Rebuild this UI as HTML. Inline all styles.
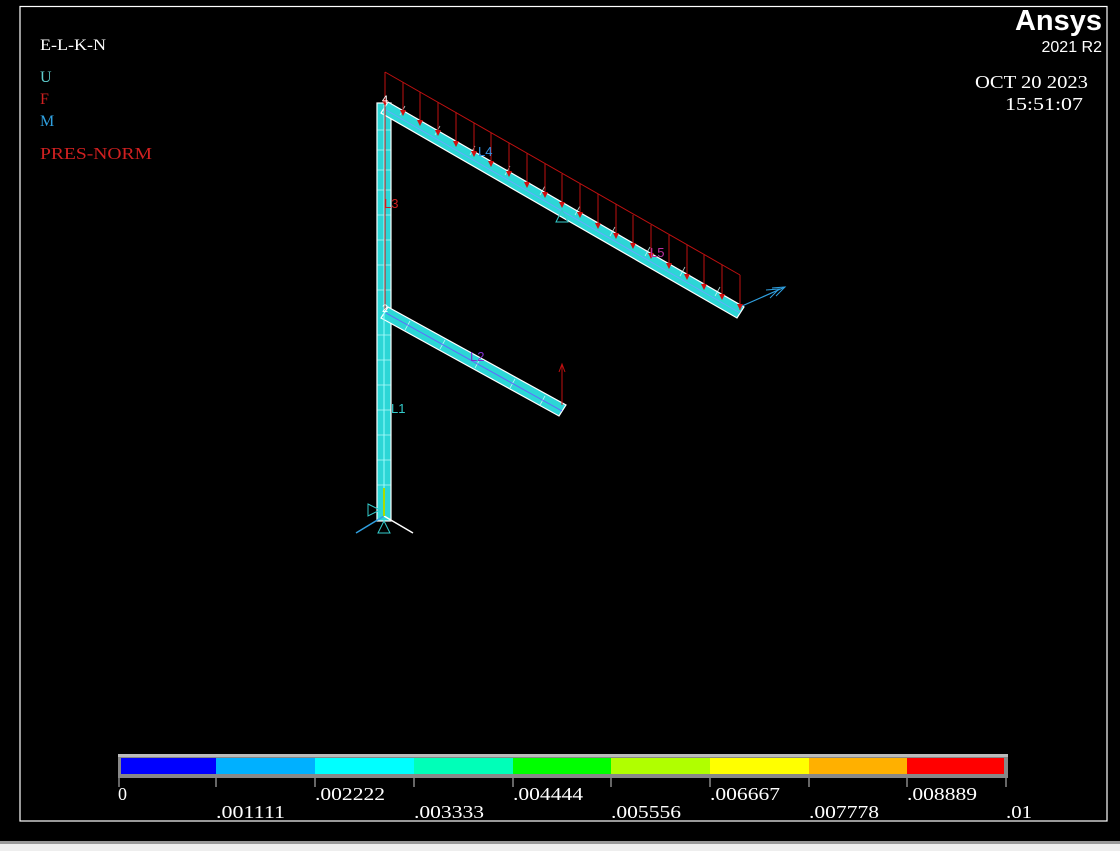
<!DOCTYPE html>
<html><head><style>
html,body{margin:0;padding:0;background:#000;width:1120px;height:851px;overflow:hidden}
svg{display:block}
text{font-family:"Liberation Serif",serif}
</style></head><body>
<svg width="1120" height="851" viewBox="0 0 1120 851">
<rect x="0" y="0" width="1120" height="851" fill="#000"/>
<rect x="20" y="6.5" width="1087" height="814.5" fill="none" stroke="#fff" stroke-width="1.2"/>
<rect x="0" y="841" width="1120" height="3" fill="#999"/>
<rect x="0" y="844" width="1120" height="7" fill="#eee"/>
<text x="40" y="50" fill="#fff" font-size="16" textLength="66" lengthAdjust="spacingAndGlyphs">E-L-K-N</text>
<text x="40" y="82" fill="#5fd0d0" font-size="16">U</text>
<text x="40" y="104" fill="#d02020" font-size="16">F</text>
<text x="40" y="126" fill="#30a0e0" font-size="16">M</text>
<text x="40" y="159" fill="#d02020" font-size="17" textLength="112" lengthAdjust="spacingAndGlyphs">PRES-NORM</text>
<text x="1102" y="30" fill="#fff" font-size="29" font-weight="bold" text-anchor="end" style="font-family:'Liberation Sans',sans-serif">Ansys</text>
<text x="1102" y="52" fill="#fff" font-size="16" text-anchor="end" style="font-family:'Liberation Sans',sans-serif">2021 R2</text>
<text x="975" y="88" fill="#fff" font-size="18" textLength="113" lengthAdjust="spacingAndGlyphs">OCT 20 2023</text>
<text x="1005" y="110" fill="#fff" font-size="18" textLength="78" lengthAdjust="spacingAndGlyphs">15:51:07</text>
<!-- pipes -->
<g stroke="#fff" stroke-width="1.2">
<rect x="377" y="103" width="14" height="418" fill="#2cd6d6"/>
<polygon points="388,102 744,307 737,318 381,113" fill="#2cd6d6"/>
<polygon points="388,307 566,405 559,416 381,318" fill="#2cd6d6"/>
</g>
<g stroke="#dff" stroke-width="0.8" fill="none" opacity="0.8">
<path d="M377,130h14M377,150h14M377,170h14M377,190h14M377,215h14M377,240h14M377,265h14M377,290h14M377,335h14M377,360h14M377,385h14M377,410h14M377,435h14M377,460h14M377,485h14"/>
<path d="M400,115l5,-9M435,135l5,-9M470,155l5,-9M505,175l5,-9M540,195l5,-9M575,215l5,-9M610,236l5,-9M645,256l5,-9M680,276l5,-9M715,296l5,-9"/>
<path d="M405,330l5,-9M440,349l5,-9M475,368l5,-9M510,388l5,-9M540,405l5,-9"/>
</g>
<line x1="384" y1="105" x2="384" y2="515" stroke="#9ff" stroke-width="1"/>
<line x1="386" y1="110" x2="740" y2="313" stroke="#6af" stroke-width="1"/>
<line x1="386" y1="313" x2="562" y2="411" stroke="#66f" stroke-width="1"/>
<!-- load -->
<g stroke="#c01010" stroke-width="1" fill="none">
<line x1="385" y1="72" x2="740" y2="275"/>
<line x1="385" y1="72" x2="385" y2="105"/>
<line x1="740" y1="275" x2="740" y2="310"/>
<line x1="403" y1="82" x2="403" y2="115"/><line x1="420" y1="92" x2="420" y2="125"/>
<line x1="438" y1="102" x2="438" y2="135"/><line x1="456" y1="112" x2="456" y2="146"/>
<line x1="474" y1="123" x2="474" y2="156"/><line x1="491" y1="133" x2="491" y2="166"/>
<line x1="509" y1="143" x2="509" y2="176"/><line x1="527" y1="153" x2="527" y2="187"/>
<line x1="545" y1="164" x2="545" y2="197"/><line x1="562" y1="174" x2="562" y2="207"/>
<line x1="580" y1="184" x2="580" y2="217"/><line x1="598" y1="194" x2="598" y2="228"/>
<line x1="616" y1="204" x2="616" y2="238"/><line x1="633" y1="215" x2="633" y2="248"/>
<line x1="651" y1="225" x2="651" y2="258"/><line x1="669" y1="235" x2="669" y2="268"/>
<line x1="687" y1="245" x2="687" y2="279"/><line x1="704" y1="255" x2="704" y2="289"/>
<line x1="722" y1="265" x2="722" y2="299"/>
<line x1="562" y1="405" x2="562" y2="364"/><polyline points="559,372 562,364 565,372"/>
<line x1="385" y1="103" x2="385" y2="310"/>
</g>
<g fill="#d01010">
<path d="M382,100h6l-3,6z M400,110h6l-3,6z M417,120h6l-3,6z M435,130h6l-3,6z M453,141h6l-3,6z M471,151h6l-3,6z M488,161h6l-3,6z M506,171h6l-3,6z M524,182h6l-3,6z M542,192h6l-3,6z M559,202h6l-3,6z M577,212h6l-3,6z M595,223h6l-3,6z M613,233h6l-3,6z M630,243h6l-3,6z M648,253h6l-3,6z M666,263h6l-3,6z M684,274h6l-3,6z M701,284h6l-3,6z M719,294h6l-3,6z M737,304h6l-3,6z"/>
</g>
<text x="384" y="208" fill="#d02020" font-size="13" style="font-family:'Liberation Sans',sans-serif">L3</text>
<text x="478" y="156" fill="#3090e0" font-size="13" style="font-family:'Liberation Sans',sans-serif">L4</text>
<text x="650" y="257" fill="#c030a0" font-size="13" style="font-family:'Liberation Sans',sans-serif">L5</text>
<text x="470" y="361" fill="#8030d0" font-size="13" style="font-family:'Liberation Sans',sans-serif">L2</text>
<text x="391" y="413" fill="#3cc" font-size="13" style="font-family:'Liberation Sans',sans-serif">L1</text>
<text x="382" y="103" fill="#fff" font-size="11" style="font-family:'Liberation Sans',sans-serif">4</text>
<text x="382" y="312" fill="#fff" font-size="11" style="font-family:'Liberation Sans',sans-serif">2</text>
<line x1="742" y1="306" x2="785" y2="287" stroke="#30a0e0" stroke-width="1.2"/>
<polyline points="772,288 785,287 776,296" stroke="#30a0e0" fill="none"/>
<polyline points="766,290 779,289 770,298" stroke="#30a0e0" fill="none"/>
<path d="M556,222l6,-12l6,12z" stroke="#3cc" fill="none"/>
<path d="M378,533l6,-12l6,12z" stroke="#3cc" fill="none"/>
<path d="M368,504l12,6l-12,6z" stroke="#3cc" fill="none"/>
<line x1="384" y1="516" x2="356" y2="533" stroke="#30a0e0" stroke-width="1.5"/>
<line x1="384" y1="516" x2="413" y2="533" stroke="#fff" stroke-width="1.5"/>
<line x1="384" y1="516" x2="384" y2="488" stroke="#aadd00" stroke-width="2"/>
<!-- legend -->
<rect x="118" y="754" width="890" height="24" fill="#888"/>
<rect x="118" y="754" width="890" height="3" fill="#bbb"/>
<rect x="121" y="758" width="95" height="16" fill="#0000ff"/>
<rect x="216" y="758" width="99" height="16" fill="#00b0ff"/>
<rect x="315" y="758" width="99" height="16" fill="#00ffff"/>
<rect x="414" y="758" width="99" height="16" fill="#00ffb8"/>
<rect x="513" y="758" width="98" height="16" fill="#00ff00"/>
<rect x="611" y="758" width="99" height="16" fill="#b0ff00"/>
<rect x="710" y="758" width="99" height="16" fill="#ffff00"/>
<rect x="809" y="758" width="98" height="16" fill="#ffb000"/>
<rect x="907" y="758" width="97" height="16" fill="#ff0000"/>
<g stroke="#ccc" stroke-width="1">
<line x1="119" y1="778" x2="119" y2="787"/><line x1="216" y1="778" x2="216" y2="787"/><line x1="315" y1="778" x2="315" y2="787"/><line x1="414" y1="778" x2="414" y2="787"/><line x1="513" y1="778" x2="513" y2="787"/><line x1="611" y1="778" x2="611" y2="787"/><line x1="710" y1="778" x2="710" y2="787"/><line x1="809" y1="778" x2="809" y2="787"/><line x1="907" y1="778" x2="907" y2="787"/><line x1="1006" y1="778" x2="1006" y2="787"/>
</g>
<g fill="#fff" font-size="18">
<text x="118" y="800">0</text>
<text x="315" y="800" textLength="70" lengthAdjust="spacingAndGlyphs">.002222</text>
<text x="513" y="800" textLength="70" lengthAdjust="spacingAndGlyphs">.004444</text>
<text x="710" y="800" textLength="70" lengthAdjust="spacingAndGlyphs">.006667</text>
<text x="907" y="800" textLength="70" lengthAdjust="spacingAndGlyphs">.008889</text>
<text x="216" y="818" textLength="69" lengthAdjust="spacingAndGlyphs">.001111</text>
<text x="414" y="818" textLength="70" lengthAdjust="spacingAndGlyphs">.003333</text>
<text x="611" y="818" textLength="70" lengthAdjust="spacingAndGlyphs">.005556</text>
<text x="809" y="818" textLength="70" lengthAdjust="spacingAndGlyphs">.007778</text>
<text x="1006" y="818" textLength="26" lengthAdjust="spacingAndGlyphs">.01</text>
</g>
</svg>
</body></html>
